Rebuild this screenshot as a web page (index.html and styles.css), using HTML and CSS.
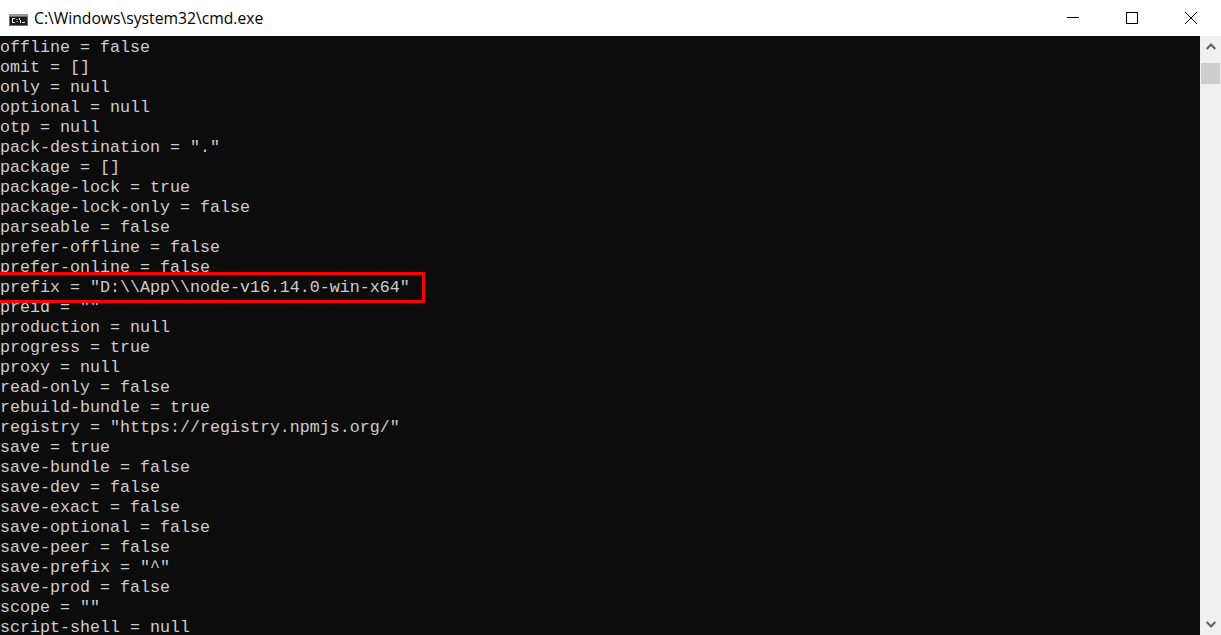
FILE: index.html
```html
<!DOCTYPE html>
<html lang="en">
<head>
<meta charset="utf-8">
<title>cmd.exe</title>
<link rel="stylesheet" href="styles.css">
</head>
<body>
<div class="window">
  <header class="titlebar">
    <div class="title-left">
      <svg class="app-icon" width="19" height="12" viewBox="0 0 19 12"><rect width="19" height="12" fill="#6e6e6e"/><rect x="0" y="0" width="19" height="2" fill="#9a9a9a"/><rect x="1" y="3" width="17" height="8" fill="#1c1c1c"/><path d="M3 4h3v1H3zM3 5h1v3H3zM3 8h3v1H3zM7.500 5h1v1h-1zM7.500 7h1v1h-1zM10 4h1v2h-1zM11 6h1v3h-1zM13 8h3v1h-3z" fill="#e8e8e8"/></svg>
      <span class="title">C:\Windows\system32\cmd.exe</span>
    </div>
    <div class="controls">
      <span class="ctl"><svg width="12" height="12" viewBox="0 0 12 12"><path d="M0 5.5h12" stroke="#000" fill="none"/></svg></span>
      <span class="ctl"><svg width="12" height="12" viewBox="0 0 12 12"><rect x=".5" y=".5" width="11" height="11" stroke="#000" fill="none"/></svg></span>
      <span class="ctl"><svg width="12" height="12" viewBox="0 0 12 12"><path d="M0 0l12 12M12 0L0 12" stroke="#000" fill="none"/></svg></span>
    </div>
  </header>
  <div class="main">
    <pre class="console">offline = false
omit = []
only = null
optional = null
otp = null
pack-destination = "."
package = []
package-lock = true
package-lock-only = false
parseable = false
prefer-offline = false
prefer-online = false
prefix = "D:\\App\\node-v16.14.0-win-x64"
preid = ""
production = null
progress = true
proxy = null
read-only = false
rebuild-bundle = true
registry = "https://registry.npmjs.org/"
save = true
save-bundle = false
save-dev = false
save-exact = false
save-optional = false
save-peer = false
save-prefix = "^"
save-prod = false
scope = ""
script-shell = null</pre>
    <div class="highlight"></div>
    <div class="scrollbar">
      <svg class="arrow" width="10" height="7" viewBox="0 0 10 7"><path d="M.7 6L5 1.500 9.300 6" stroke="#606060" stroke-width="2" fill="none"/></svg>
      <div class="thumb"></div>
      <svg class="arrow arrow-down" width="10" height="7" viewBox="0 0 10 7"><path d="M.7 1L5 5.500 9.300 1" stroke="#606060" stroke-width="2" fill="none"/></svg>
    </div>
  </div>
</div>
</body>
</html>
```

FILE: styles.css
```css
* { box-sizing: border-box; }
html, body { margin: 0; height: 100%; overflow: hidden; background: #fff; }
.window { height: 635px; display: flex; flex-direction: column; }
.titlebar { height: 36px; flex: none; display: flex; justify-content: space-between; align-items: center; background: #fff; padding-right: 1px; }
.title-left { display: flex; align-items: center; gap: 6px; padding-left: 9px; }
.app-icon { display: block; margin-top: 3px; }
.title { font: 15.7px/20px "Open Sans", "Noto Sans", sans-serif; color: #000; }
.controls { display: flex; }
.ctl { width: 58.67px; height: 36px; display: flex; align-items: center; justify-content: center; }
.main { position: relative; flex: 1; min-height: 0; display: flex; }
.console { flex: 1; margin: 0; padding: 2px 0 0; background: #0c0c0c; color: #cccccc; font: 16.67px/20px "Liberation Mono", monospace; overflow: hidden; }
.highlight { position: absolute; left: 0; top: 236px; width: 425px; height: 31px; border: 3px solid #f00; border-left: 0; }
.scrollbar { width: 21px; flex: none; background: #f0f0f0; display: flex; flex-direction: column; align-items: center; padding-top: 7px; }
.thumb { width: 19px; height: 21px; background: #cdcdcd; margin-top: 13px; }
.arrow-down { margin-top: auto; margin-bottom: 7px; }
```
